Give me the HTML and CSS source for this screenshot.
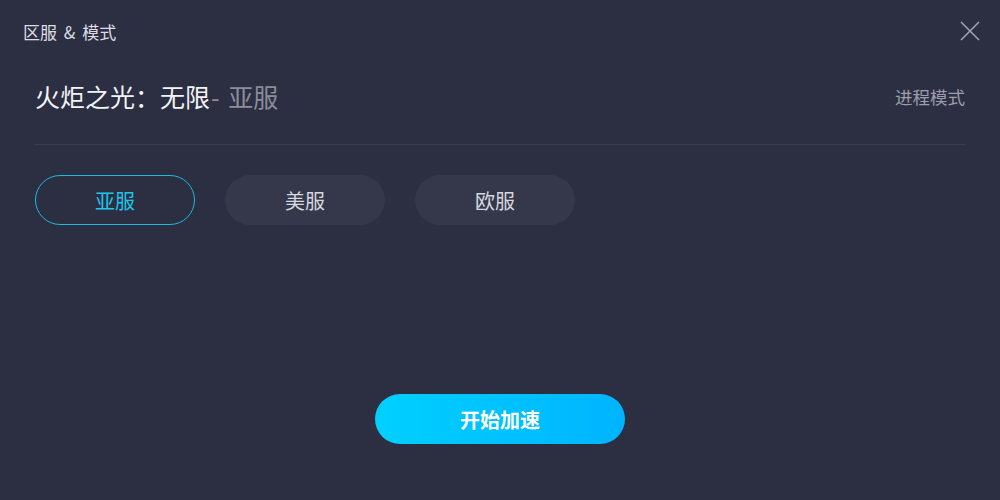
FILE: index.html
```html
<!DOCTYPE html>
<html lang="zh">
<head>
  <meta charset="UTF-8">
  <title>区服 & 模式</title>
  <link rel="stylesheet" href="styles.css">
</head>
<body>
  <div class="ventana">
    <div class="barra">
      <span class="titulo">区服 &amp; 模式</span>
      <svg class="cerrar" width="20" height="20" viewBox="0 0 20 20">
        <path d="M1 1 L19 19 M19 1 L1 19" stroke="#a4a6b4" stroke-width="1.5" fill="none"/>
      </svg>
    </div>

    <div class="cabecera">
      <h1>火炬之光：无限<span class="region">- 亚服</span></h1>
      <span class="modo">进程模式</span>
    </div>

    <div class="servidores">
      <button class="servidor activo">亚服</button>
      <button class="servidor">美服</button>
      <button class="servidor">欧服</button>
    </div>

    <div class="pie">
      <button class="iniciar">开始加速</button>
    </div>
  </div>
</body>
</html>
```

FILE: styles.css
```css
html, body {
  margin: 0;
  padding: 0;
  background-color: #2c2e42;
}

body {
  font-family: "Noto Sans CJK SC", "Liberation Sans", sans-serif;
  color: #e6e7ee;
}

.ventana {
  width: 1000px;
  height: 500px;
  display: flex;
  flex-direction: column;
  box-sizing: border-box;
}

.barra {
  height: 62px;
  display: flex;
  align-items: center;
  justify-content: space-between;
  padding: 0 20px 0 23px;
  box-sizing: border-box;
}

.titulo {
  font-size: 17px;
  word-spacing: 3px;
  color: #dcdde5;
}

.cabecera {
  margin: 0 35px;
  height: 83px;
  display: flex;
  align-items: flex-start;
  justify-content: space-between;
  border-bottom: 1px solid #3a3c51;
  box-sizing: border-box;
}

.cabecera h1 {
  margin: 12px 0 0;
  font-size: 25px;
  font-weight: normal;
  color: #f2f3f7;
  line-height: 44px;
}

.region {
  color: #8b8d9c;
  word-spacing: 3px;
  margin-left: 1px;
}

.modo {
  font-size: 17.5px;
  color: #9c9eab;
  margin-top: 22px;
  line-height: 25px;
}

.servidores {
  display: flex;
  gap: 30px;
  margin: 30px 35px 0;
}

.servidor {
  width: 160px;
  height: 50px;
  border-radius: 25px;
  border: 1px solid transparent;
  background-color: #35374b;
  color: #d6d7df;
  font-family: inherit;
  font-size: 20px;
  cursor: pointer;
}

.servidor.activo {
  background-color: transparent;
  border-color: #19bde0;
  color: #1ec4ea;
}

.pie {
  display: flex;
  justify-content: center;
  margin-top: 169px;
}

.iniciar {
  width: 250px;
  height: 50px;
  border: none;
  border-radius: 25px;
  background: linear-gradient(90deg, #00d0ff, #00b4ff);
  color: #fff;
  font-family: inherit;
  font-size: 20px;
  font-weight: bold;
  cursor: pointer;
}
```
